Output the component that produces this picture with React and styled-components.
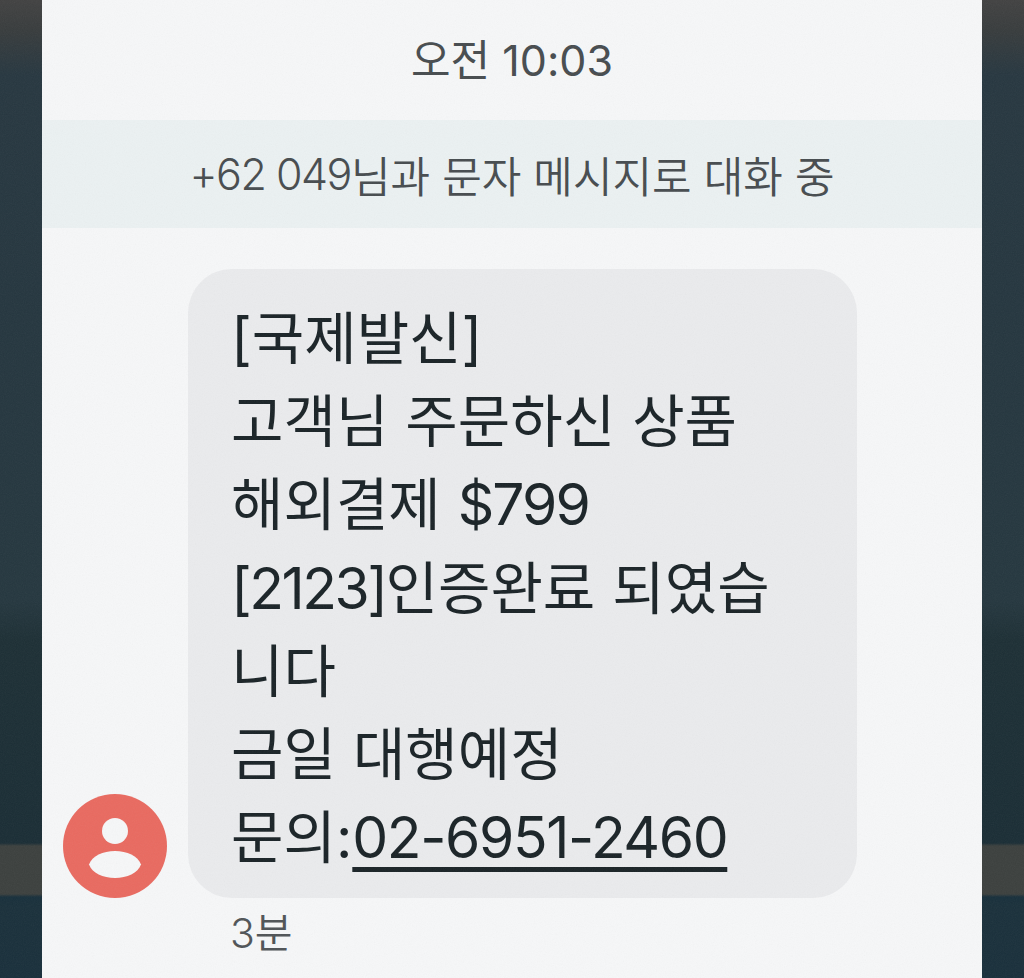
import React from "react";
import styled, { createGlobalStyle } from "styled-components";

const Global = createGlobalStyle`
  html, body { margin: 0; padding: 0; height: 100%; overflow: hidden; }
  body { font-family: Inter, "Noto Sans CJK KR", sans-serif; }
`;

const Wallpaper = styled.div`
  position: relative;
  height: 978px;
  padding: 0 42px;
  box-sizing: border-box;
  overflow: hidden;
  background: linear-gradient(
    to bottom,
    #424242 0,
    #383c3d 30px,
    #273740 75px,
    #25363f 300px,
    #25373f 600px,
    #1d2f35 640px,
    #1a2d35 840px,
    #1a2d35 843px,
    #3c403e 846px,
    #3c403e 894px,
    #172f3b 897px,
    #1a303b 905px,
    #192f3b 978px
  );
`;

const Thread = styled.main`
  height: 978px;
  background: #f6f7f8;
  display: flex;
  flex-direction: column;
  color: #1c2529;
`;

const Timestamp = styled.div`
  height: 120px;
  box-sizing: border-box;
  padding-top: 34px;
  text-align: center;
  font-size: 43px;
  line-height: 52px;
  color: #474c4f;
`;

const Notice = styled.div`
  height: 108px;
  background: #ebf1f2;
  display: flex;
  align-items: center;
  justify-content: center;
  font-size: 43px;
  color: #474c4f;
  font-weight: 350;
`;

const MessageRow = styled.div`
  margin-top: 41px;
  padding-left: 21px;
  display: flex;
  align-items: flex-end;
  gap: 21px;
`;

const Avatar = styled.div`
  width: 104px;
  height: 104px;
  flex: none;
  svg { display: block; }
`;

const Bubble = styled.div`
  width: 669px;
  height: 629px;
  box-sizing: border-box;
  padding: 28px 44px 0 43px;
  background: #eaebed;
  border-radius: 44px;
  font-size: 57px;
  font-weight: 400;
  word-spacing: 1px;
  line-height: 83.2px;
  color: #1a2327;
`;

const Latin = styled.span`
  letter-spacing: ${(p) => p.$tight}px;
`;

const Phone = styled.span`
  letter-spacing: -1.4px;
  text-decoration: underline;
  text-decoration-thickness: 5px;
  text-underline-offset: 9px;
`;

const Age = styled.div`
  margin: 7px 0 0 188px;
  font-size: 41px;
  font-weight: 350;
  line-height: 56px;
  color: #505457;
`;

const Grain = styled.svg`
  position: absolute;
  inset: 0;
  width: 100%;
  height: 100%;
  opacity: 0.06;
  pointer-events: none;
`;

function PersonAvatar() {
  return (
    <svg width="104" height="104" viewBox="0 0 104 104" aria-hidden="true">
      <circle cx="52" cy="52" r="52" fill="#e96a60" />
      <circle cx="52" cy="37" r="13" fill="#f6f7f8" />
      <path d="M26 70.5C29 62 40 57 52 57s23 5 26 13.5C75 79 64 84 52 84s-23-5-26-13.5Z" fill="#f6f7f8" />
    </svg>
  );
}

export default function App() {
  return (
    <>
      <Global />
      <Wallpaper>
        <Thread>
          <Timestamp>오전 10:03</Timestamp>
          <Notice><Latin $tight={-1.5}>+62 049</Latin>님과 문자 메시지로 대화 중</Notice>
          <MessageRow>
            <Avatar><PersonAvatar /></Avatar>
            <Bubble>
              <div>[국제발신]</div>
              <div>고객님 주문하신 상품</div>
              <div>해외결제 <Latin $tight={-2}>$799</Latin></div>
              <div><Latin $tight={-2.5}>[2123]</Latin>인증완료 되였습</div>
              <div>니다</div>
              <div>금일 대행예정</div>
              <div>문의:<Phone>02-6951-2460</Phone></div>
            </Bubble>
          </MessageRow>
          <Age>3분</Age>
        </Thread>
        <Grain aria-hidden="true">
          <filter id="grain">
            <feTurbulence type="fractalNoise" baseFrequency="0.9" numOctaves="2" seed="4" />
            <feColorMatrix type="saturate" values="0" />
          </filter>
          <rect width="100%" height="100%" filter="url(#grain)" />
        </Grain>
      </Wallpaper>
    </>
  );
}
